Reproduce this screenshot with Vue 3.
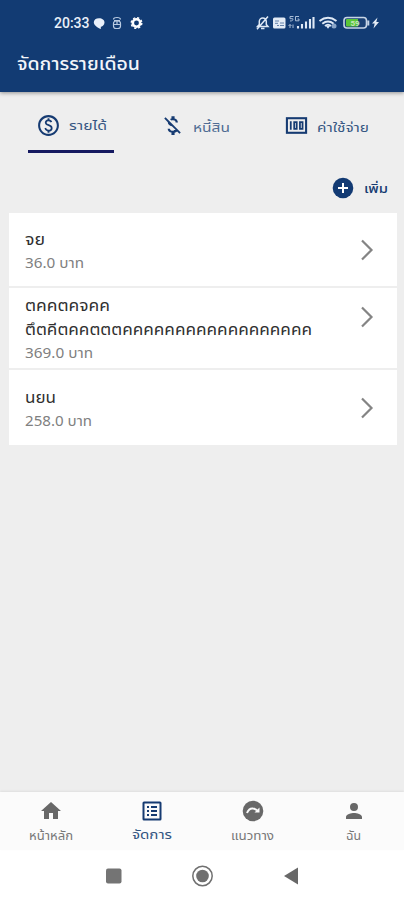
<script setup>
const tabs = [
  { id: 'income', label: 'รายได้', w: 38 },
  { id: 'debt', label: 'หนี้สิน', w: 37 },
  { id: 'expense', label: 'ค่าใช้จ่าย', w: 52 },
]
const rows = [
  { lines: [{ t: 'จย', w: 20 }], sub: '36.0 บาท', w: 59, h: 75 },
  { lines: [{ t: 'ตคคตคจคค', w: 85 }, { t: 'ตึตคีตคคตตตคคคคคคคคคคคคคคคคคค', w: 287 }], sub: '369.0 บาท', w: 68, h: 82 },
  { lines: [{ t: 'นยน', w: 31 }], sub: '258.0 บาท', w: 67, h: 75 },
]
const nav = [
  { id: 'home', label: 'หน้าหลัก', w: 44 },
  { id: 'manage', label: 'จัดการ', w: 40 },
  { id: 'guide', label: 'แนวทาง', w: 43 },
  { id: 'me', label: 'ฉัน', w: 15 },
]
</script>

<template>
  <div class="app">
    <header class="header">
      <div class="status">
        <span class="clock">20:33</span>
        <svg class="left-icons" width="50" height="14" viewBox="0 0 50 14">
          <path fill="#e9f0fa" d="M5 2.200c3.200 0 5.500 1.700 5.500 4.200S8.200 10.600 6.800 10.800L6.900 13C3 11.800-.2 8.800-.2 6.300-.2 3.800 2 2.200 5 2.200z" />
          <g fill="none" stroke="#b9cbe2" stroke-width="1.200"><rect x="19.500" y="5" width="7" height="7.500" rx="2.500" /><path d="M19.500 3.500q0-2 3.500-2t3.500 2M20 8.500h6M20 4.500h6M23 5v4" /></g>
          <circle cx="42.500" cy="7" r="3.700" fill="none" stroke="#fff" stroke-width="2.500" />
          <circle cx="42.500" cy="7" r="5.300" fill="none" stroke="#fff" stroke-width="1.400" stroke-dasharray="2.200 1.960" />
        </svg>
        <svg class="right-icons" width="126" height="16" viewBox="0 0 126 16">
          <g fill="none" stroke="#dfe9f6" stroke-width="1.500">
            <path d="M2.500 11.500h10.500l-1.700-2V6.500a3.500 3.500 0 0 0-7 0v3zM6 13.500h3.500M13 1.500 2 14.200" />
          </g>
          <rect x="18" y="2.500" width="12.500" height="11" rx="1.500" fill="#e3ebf5" />
          <path d="M20 6h4M20 8.300h3M25 8h4M22 10.500h2M25 10.500h4" stroke="#6482aa" />
          <g fill="none" stroke="#a9bdd7"><path d="M38.500 1.500H35v2.200h2.800q.7 2.300-2.800 2.300M44 1.500h-3.500v4.300H44V4h-1.500" /><path d="M35 9.500v3.500M38 13V9.500M33.500 11l1.500-1.500 1.500 1.500" /></g>
          <path d="M43 13.500V11M47 13.500V9M51 13.500V6.500M55 13.500V4M58.500 13.500V2" stroke="#dfe9f6" stroke-width="2.100" />
          <path d="M64.500 6q8.500-6.500 17 0M67.300 8.700q5.700-4.500 11.400 0M70 11q3-2.500 6 0" fill="none" stroke="#dfe9f6" stroke-width="2" />
          <path d="m71 11 2 2.700 2-2.700z" fill="#dfe9f6" /><circle cx="79" cy="11" r="2.500" fill="#8aa5c8" />
          <rect x="89" y="2.500" width="22.500" height="10.500" rx="3" fill="#1b4175" stroke="#c7d5e6" stroke-width="1.600" />
          <path d="M92 4h11v7.500H92q-1 0-1-1V5q0-1 1-1z" fill="#5bc638" />
          <text x="95.500" y="10.800" font-family="Roboto, sans-serif" font-size="8" font-weight="700" fill="#c4e5b8">59</text>
          <path d="M113.300 5.500v5" stroke="#c7d5e6" stroke-width="2" />
          <path d="m122.500 2.500-5.500 6h2.700l-1.200 5 5.500-6.500h-2.700z" fill="#e3ebf5" />
        </svg>
      </div>
      <h1><svg width="123" height="30"><text x="0" y="20" textLength="123" lengthAdjust="spacingAndGlyphs">จัดการรายเดือน</text></svg></h1>
    </header>

    <nav class="tabs">
      <div v-for="t in tabs" :key="t.id" class="tab" :class="t.id">
        <svg v-if="t.id === 'income'" class="ti" width="25" height="25" viewBox="0 0 24 24" fill="#163b72"><path d="M12 2C6.480 2 2 6.480 2 12s4.480 10 10 10 10-4.480 10-10S17.520 2 12 2zm0 18c-4.410 0-8-3.590-8-8s3.590-8 8-8 8 3.590 8 8-3.590 8-8 8zm.89-8.900c-1.780-.59-2.640-.96-2.640-1.900 0-1.020 1.110-1.390 1.810-1.390 1.310 0 1.790.99 1.900 1.340l1.580-.67c-.15-.44-.82-1.910-2.660-2.230V5h-1.750v1.260c-2.600.56-2.620 2.850-2.620 2.960 0 2.270 2.250 2.910 3.350 3.310 1.580.56 2.280 1.070 2.280 2.030 0 1.130-1.050 1.610-1.980 1.610-1.820 0-2.340-1.870-2.400-2.090l-1.660.67c.63 2.190 2.280 2.780 3.030 2.960V19h1.750v-1.240c.52-.09 3.020-.59 3.020-3.220.01-1.390-.6-2.610-3.010-3.440z" /></svg>
        <svg v-else-if="t.id === 'debt'" class="ti" width="25" height="25" viewBox="0 0 24 24" fill="#163b72"><path d="M12.500 6.900c1.780 0 2.440.85 2.500 2.100h2.210c-.07-1.720-1.120-3.300-3.210-3.810V3h-3v2.160c-.53.12-1.030.3-1.480.54l1.470 1.470c.41-.17.910-.27 1.510-.27zM5.330 4.060 4.060 5.330 7.500 8.770c0 2.080 1.560 3.210 3.910 3.910l3.510 3.510c-.34.48-1.050.91-2.420.91-2.060 0-2.870-.92-2.980-2.100h-2.200c.12 2.190 1.760 3.420 3.680 3.830V21h3v-2.150c.96-.18 1.820-.55 2.450-1.120l2.220 2.220 1.270-1.270L5.330 4.060z" /></svg>
        <svg v-else class="ti" width="25" height="25" viewBox="0 0 24 24" fill="none" stroke="#163b72"><rect x="2.800" y="5" width="18.400" height="14" stroke-width="2" /><path d="M6.500 8v8M9.800 8.700h2.400v6.600H9.800zM15.300 8.700h2.500v6.600h-2.500z" stroke-width="1.700" /></svg>
        <svg class="tl" :width="t.w" height="28"><text x="0" y="20" :textLength="t.w" lengthAdjust="spacingAndGlyphs">{{ t.label }}</text></svg>
      </div>
    </nav>

    <div class="add">
      <svg width="24" height="24" viewBox="0 0 24 24"><circle cx="12" cy="12" r="10.300" fill="#123a73" /><path d="M12 7v10M7 12h10" stroke="#fff" stroke-width="2" /></svg>
      <svg class="al" width="24" height="28"><text x="0" y="19" textLength="24" lengthAdjust="spacingAndGlyphs">เพิ่ม</text></svg>
    </div>

    <main class="list">
      <div v-for="(r, i) in rows" :key="i" class="row" :style="{ height: r.h + 'px' }">
        <div class="copy">
          <svg v-for="(l, j) in r.lines" :key="j" class="line" :width="l.w" height="24"><text x="0" y="18" :textLength="l.w" lengthAdjust="spacingAndGlyphs">{{ l.t }}</text></svg>
          <svg class="sub" :width="r.w" height="22"><text x="0" y="16.500" :textLength="r.w" lengthAdjust="spacingAndGlyphs">{{ r.sub }}</text></svg>
        </div>
        <svg class="chev" :class="{ raised: r.lines.length > 1 }" width="14" height="22" viewBox="0 0 14 22"><path d="m2 1.500 9.500 9.500L2 20.500" fill="none" stroke="#848484" stroke-width="2.200" /></svg>
      </div>
    </main>

    <footer>
      <div class="bottom">
        <div v-for="n in nav" :key="n.id" class="item" :class="{ on: n.id === 'manage' }">
          <svg width="24" height="24" viewBox="0 0 24 24">
            <path v-if="n.id === 'home'" fill="#686868" d="M10 20v-6h4v6h5v-8h3L12 3 2 12h3v8z" />
            <g v-else-if="n.id === 'manage'" fill="none" stroke="#163b72" stroke-width="2"><rect x="3.500" y="3.500" width="17" height="17" rx=".5" /><path d="M7 8h2M11 8h6M7 12h2M11 12h6M7 16h2M11 16h6" stroke-width="1.800" /></g>
            <g v-else-if="n.id === 'guide'"><circle cx="12" cy="12" r="10.300" fill="#686868" /><path d="M6 14q2-5 6-4.500 2.500.2 4 2" fill="none" stroke="#fafafa" stroke-width="2" /><path d="M18.500 8.500v5h-5z" fill="#fafafa" /></g>
            <path v-else fill="#686868" d="M12 12a4 4 0 1 0 0-8 4 4 0 0 0 0 8zm0 2c-2.700 0-8 1.300-8 4v2h16v-2c0-2.700-5.300-4-8-4z" />
          </svg>
          <svg class="nl" :width="n.w" height="24"><text x="0" :y="n.id === 'manage' ? 15.500 : 16.500" :textLength="n.w" lengthAdjust="spacingAndGlyphs">{{ n.label }}</text></svg>
        </div>
      </div>
      <div class="system">
        <svg width="202" height="24" viewBox="0 0 202 24"><rect x="5" y="4.500" width="15.500" height="15" rx="2" fill="#747474" /><circle cx="101.500" cy="12" r="9.700" fill="none" stroke="#707070" stroke-width="1.500" /><circle cx="101.500" cy="12" r="6.300" fill="#707070" /><path d="M197 3.500v17L183 12z" fill="#686868" /></svg>
      </div>
    </footer>
  </div>
</template>

<style>
body { margin: 0; }
</style>

<style scoped>
.app { width: 404px; height: 900px; background: #eee; display: flex; flex-direction: column; overflow: hidden; font-family: "Noto Sans Thai", Kanit, Prompt, "Noto Sans", sans-serif; }
svg { display: block; flex: none; overflow: visible; }
.header { height: 92px; background: #123b73; box-shadow: 0 1px 4px #0006; flex: none; }
.status { height: 46px; display: flex; align-items: center; padding-left: 54px; }
.clock { font: 500 14px Roboto, sans-serif; color: #e9f0fa; width: 40px; }
.right-icons { margin-left: 111px; }
h1 { margin: 4px 0 0 17px; font-size: 18px; font-weight: 500; }
h1 text { fill: #f2f5fa; }
.tabs { display: flex; padding: 8px 0 0 28px; height: 53px; flex: none; box-sizing: content-box; }
.tab { display: flex; align-items: center; height: 53px; gap: 8px; box-sizing: border-box; font-size: 13px; }
.tab text { fill: #365783; }
.income { width: 86px; border-bottom: 3px solid #151960; padding-left: 7.5px; }
.debt { height: 51px; padding-left: 46px; }
.debt text { fill: #506c93; }
.expense { height: 51px; padding-left: 54px; }
.income .tl { margin-top: -2px; }
.add { height: 60px; display: flex; align-items: center; justify-content: flex-end; gap: 8px; padding: 9px 16px 0 0; box-sizing: border-box; font-size: 13px; font-weight: 500; flex: none; }
.add text { fill: #163b72; }
.add svg:first-child { margin-right: 1px; }
.list { margin: 0 7px 0 9px; background: #fff; }
.row { display: flex; align-items: center; justify-content: space-between; box-sizing: border-box; border-bottom: 2px solid #eee; padding: 0 23px 0 16px; }
.row:last-child { border-bottom: 0; }
.line { font-size: 15px; }
.line text { fill: #303030; }
.sub { font-size: 14px; }
.sub text { fill: #808080; }
.chev.raised { margin-bottom: 22px; }
footer { margin-top: auto; background: #fff; }
.bottom { height: 58px; background: #fbfbfb; display: grid; grid-template-columns: repeat(4, 1fr); box-shadow: 0 -1px 2px #0001; }
.item { display: flex; flex-direction: column; align-items: center; padding-top: 7px; font-size: 12px; }
.item text { fill: #777; }
.item.on { font-size: 13px; }
.item.on text { fill: #315481; }
.system { height: 50px; padding-top: 2px; box-sizing: border-box; display: flex; justify-content: center; align-items: center; }
</style>
